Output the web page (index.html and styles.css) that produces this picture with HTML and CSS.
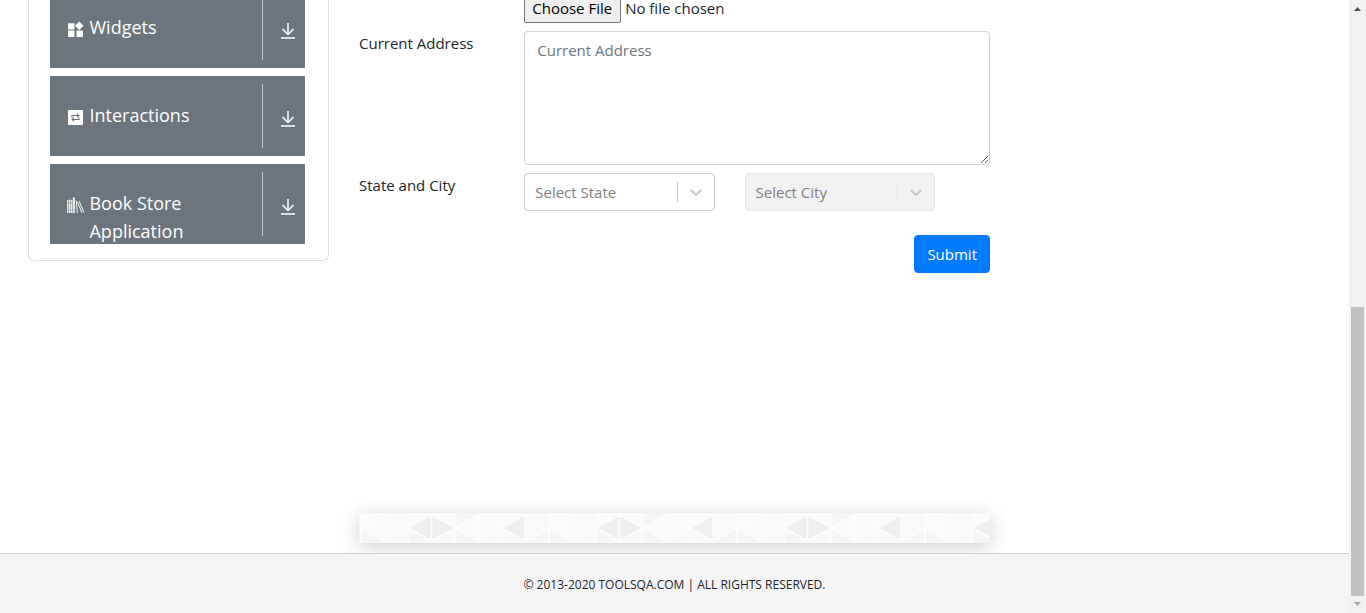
FILE: index.html
```html
<!DOCTYPE html>
<html lang="en">
<head>
<meta charset="utf-8">
<title>ToolsQA</title>
<link rel="stylesheet" href="styles.css">
</head>
<body>
<div class="page">
  <main class="main">
    <nav class="sidebar">
      <ul class="menu">
        <li><button class="menu-item" type="button">
          <span class="menu-label">
            <svg class="menu-icon" viewBox="0 0 16 16"><path fill="#fff" d="M1 2h6v6H1zM1 9h6v6H1zM9 9h6v6H9zM11.500 .500l4 4-4 4-4-4z"/></svg>
            <span class="menu-text">Widgets</span>
          </span>
          <span class="menu-toggle"><svg viewBox="0 0 16 16"><path fill="none" stroke="#fff" stroke-width="1.500" d="M8 0v11M2.500 6L8 11.500 13.500 6M1 15h14"/></svg></span>
        </button></li>
        <li><button class="menu-item" type="button">
          <span class="menu-label">
            <svg class="menu-icon" viewBox="0 0 17 17"><rect x="1" y="1" width="15" height="15" rx="1" fill="#fff"/><path fill="none" stroke="#6c757d" stroke-width="1.200" d="M5 8.500V6.500h5.500M12 8.500v2H6.500"/><path fill="#6c757d" d="M10 4.300l2.800 2.200L10 8.700zM7 8.300v4.400l-2.800-2.200z"/></svg>
            <span class="menu-text">Interactions</span>
          </span>
          <span class="menu-toggle"><svg viewBox="0 0 16 16"><path fill="none" stroke="#fff" stroke-width="1.500" d="M8 0v11M2.500 6L8 11.500 13.500 6M1 15h14"/></svg></span>
        </button></li>
        <li><button class="menu-item" type="button">
          <span class="menu-label">
            <svg class="menu-icon" viewBox="0 0 17 17"><path fill="#fff" opacity=".85" d="M0 3h1.500v13H0zM2 2.500h1.200V16H2zM3.700 3h1.600v13H3.700zM5.800 .500h2.200V16H5.800z"/><path fill="none" stroke="#fff" stroke-width=".900" d="M9.300 3.500L10.300 16M10.500 5l4.500 11M12 4l5 11.500"/><path stroke="#6c757d" stroke-width=".400" d="M0 6h5.500M0 13h8"/></svg>
            <span class="menu-text">Book Store Application</span>
          </span>
          <span class="menu-toggle"><svg viewBox="0 0 16 16"><path fill="none" stroke="#fff" stroke-width="1.500" d="M8 0v11M2.500 6L8 11.500 13.500 6M1 15h14"/></svg></span>
        </button></li>
      </ul>
    </nav>

    <div class="content">
      <form class="form">
        <div class="row">
          <div class="col-label"></div>
          <div class="col-wide"><input class="file" type="file" aria-label="Select picture"></div>
        </div>
        <div class="row">
          <label class="col-label" for="address">Current Address</label>
          <div class="col-wide"><textarea class="textarea" id="address" placeholder="Current Address"></textarea></div>
        </div>
        <div class="row">
          <label class="col-label" for="state">State and City</label>
          <div class="col-select">
            <div class="select">
              <select id="state"><option>Select State</option></select>
              <span class="indicator"><svg viewBox="0 0 20 20"><path fill="currentColor" d="M4.516 7.548c0.436-0.446 1.043-0.481 1.576 0l3.908 3.747 3.908-3.747c0.533-0.481 1.141-0.446 1.574 0 0.436 0.445 0.408 1.197 0 1.615-0.406 0.418-4.695 4.502-4.695 4.502-0.217 0.223-0.502 0.335-0.787 0.335s-0.570-0.112-0.789-0.335c0 0-4.287-4.084-4.695-4.502s-0.436-1.170 0-1.615z"/></svg></span>
            </div>
          </div>
          <div class="col-select">
            <div class="select select-disabled">
              <select aria-label="City" disabled><option>Select City</option></select>
              <span class="indicator"><svg viewBox="0 0 20 20"><path fill="currentColor" d="M4.516 7.548c0.436-0.446 1.043-0.481 1.576 0l3.908 3.747 3.908-3.747c0.533-0.481 1.141-0.446 1.574 0 0.436 0.445 0.408 1.197 0 1.615-0.406 0.418-4.695 4.502-4.695 4.502-0.217 0.223-0.502 0.335-0.787 0.335s-0.570-0.112-0.789-0.335c0 0-4.287-4.084-4.695-4.502s-0.436-1.170 0-1.615z"/></svg></span>
            </div>
          </div>
        </div>
        <div class="actions"><button class="submit" type="button">Submit</button></div>
      </form>
      <div class="banner">
        <svg width="100%" height="30">
          <defs>
            <pattern id="facets" x="2" y="0" width="188" height="30" patternUnits="userSpaceOnUse">
              <rect width="188" height="30" fill="#f8f8f8"/>
              <path fill="#fbfbfb" d="M0 0h23.500L0 15zM47 0h23.500L47 15zM70.500 0H94v15zM117.500 0H141v15zM141 0h23.500L141 15z"/>
              <path fill="#f5f5f5" d="M94 0h23.500L94 15zM0 30V15l23.500 15zM47 30V15l23.500 15zM94 30V15l23.500 15zM188 30V15l-23.500 15z"/>
              <path fill="#fafafa" d="M0 15L23.500 2v26zM94 15l23.500-13v26z"/>
              <path fill="#f9f9f9" d="M23.500 2v26L47 15zM117.500 2v26L141 15z"/>
              <path fill="#eee" d="M47 15L70.500 2 94 15 70.500 28zM141 15l23.500-13v26z"/>
              <path fill="none" stroke="#fcfcfc" stroke-width="1.800" d="M0 15L23.500 2 47 15 70.500 2 94 15 117.500 2 141 15 164.500 2 188 15 164.500 28 141 15 117.500 28 94 15 70.500 28 47 15 23.500 28zM0 0v30M188 0v30M23.500 0v30M47 0v30M70.500 0v30M94 0v30M117.500 0v30M141 0v30M164.500 0v30"/>
            </pattern>
          </defs>
          <rect width="100%" height="30" fill="url(#facets)"/>
        </svg>
      </div>
    </div>
  </main>
  <footer class="footer">© 2013-2020 TOOLSQA.COM | ALL RIGHTS RESERVED.</footer>
</div>
<div class="scrollbar">
  <svg class="arrow" viewBox="0 0 17 17"><path fill="#505050" d="M5 11h7L8.500 7z"/></svg>
  <div class="track"><div class="thumb"></div></div>
  <svg class="arrow" viewBox="0 0 17 17"><path fill="#a3a3a3" d="M5 6h7l-3.500 4z"/></svg>
</div>
</body>
</html>
```
FILE: styles.css
```css
* { box-sizing: border-box; }

body {
  margin: 0;
  height: 100vh;
  overflow: hidden;
  display: flex;
  font: 15px/24px "Open Sans", "Noto Sans", sans-serif;
  color: #212529;
  background: #fff;
}

button, input, select, textarea { font: inherit; color: inherit; }

.page {
  flex: 1;
  min-width: 0;
  display: flex;
  flex-direction: column;
}

.main {
  flex: 1;
  display: grid;
  grid-template-columns: 1fr 2fr 1fr;
  margin-top: -20px;
  padding: 0 1%;
}

.sidebar {
  align-self: start;
  margin: 0 15px;
  padding: 8px 23px 16px 21px;
  border: 1px solid #dfdfdf;
  border-top: 0;
  border-radius: 0 0 6px 6px;
}

.menu {
  list-style: none;
  margin: 0;
  padding: 0;
  display: grid;
  gap: 8px;
}

.menu-item {
  width: 100%;
  height: 80px;
  padding: 0;
  border: 0;
  background: #6c757d;
  color: #fff;
  display: flex;
  overflow: hidden;
  text-align: left;
  cursor: pointer;
}

.menu-label {
  flex: 1;
  display: flex;
  gap: 5px;
  padding: 25px 16px 0 17px;
  font-size: 18px;
  line-height: 28px;
}

.menu-icon {
  width: 17px;
  height: 17px;
  margin-top: 8px;
  flex: none;
  overflow: visible;
}

.menu-toggle {
  width: 43px;
  height: 64px;
  margin-top: 8px;
  padding: 5px 0 0 8px;
  border-left: 1px solid #c4c4c4;
  display: flex;
  align-items: center;
  justify-content: center;
}

.menu-toggle svg { width: 16px; height: 16px; }

.content {
  display: flex;
  flex-direction: column;
  padding-bottom: 10px;
}

.form {
  display: grid;
  gap: 8px;
  padding-top: 13px;
}

.row {
  display: grid;
  grid-template-columns: repeat(12, 1fr);
}

.col-label { grid-column: span 3; padding: 0 15px; }
.col-wide { grid-column: span 9; padding: 0 15px; display: grid; }
.col-select { grid-column: span 4; padding: 0 15px; }

.file { width: 100%; height: 30px; line-height: 24px; }

.file::file-selector-button {
  font: inherit;
  height: 30px;
  margin: 0 4px 0 0;
  padding: 0 8px 0 7px;
  border: 1px solid #767676;
  border-radius: 2px;
  background: #efefef;
  color: #000;
}

.textarea {
  width: 100%;
  height: 134px;
  padding: 6px 12px;
  border: 1px solid #ced4da;
  border-radius: 4px;
  background: #fff;
}

.textarea::placeholder { color: #6c757d; opacity: 1; }

.select {
  display: grid;
  height: 38px;
  color: #ccc;
}

.select > * { grid-area: 1 / 1; }

.select select {
  appearance: none;
  width: 100%;
  padding: 0 10px;
  border: 1px solid #ccc;
  border-radius: 4px;
  background: #fff;
  color: #808080;
  opacity: 1;
}

.indicator {
  justify-self: end;
  align-self: center;
  width: 38px;
  height: 20px;
  padding: 0 9px 0 8px;
  border-left: 1px solid #ccc;
  pointer-events: none;
}

.indicator svg { display: block; width: 20px; height: 20px; }

.select-disabled select { background: #f2f2f2; border-color: #e6e6e6; }
.select-disabled .indicator { border-color: #e6e6e6; }

.actions {
  display: flex;
  justify-content: flex-end;
  padding: 16px 15px 0;
}

.submit {
  height: 38px;
  padding: 0 12px;
  border: 1px solid #007bff;
  border-radius: 4px;
  background: #007bff;
  color: #fff;
  cursor: pointer;
}

.banner {
  height: 30px;
  margin: auto 15px 0;
  box-shadow: 0 4px 20px rgba(0, 0, 0, .2);
}

.banner svg { display: block; }

.footer {
  position: relative;
  height: 60px;
  padding-top: 2px;
  border-top: 1px solid #ccc;
  background: #f4f4f4;
  display: flex;
  align-items: center;
  justify-content: center;
  font-size: 12px;
}

.scrollbar {
  width: 17px;
  background: #f1f1f1;
  display: flex;
  flex-direction: column;
}

.arrow { width: 17px; height: 17px; flex: none; }

.track {
  flex: 1;
  display: flex;
  flex-direction: column;
  justify-content: flex-end;
  padding: 0 2px;
}

.thumb { height: 50%; background: #c1c1c1; }
```
